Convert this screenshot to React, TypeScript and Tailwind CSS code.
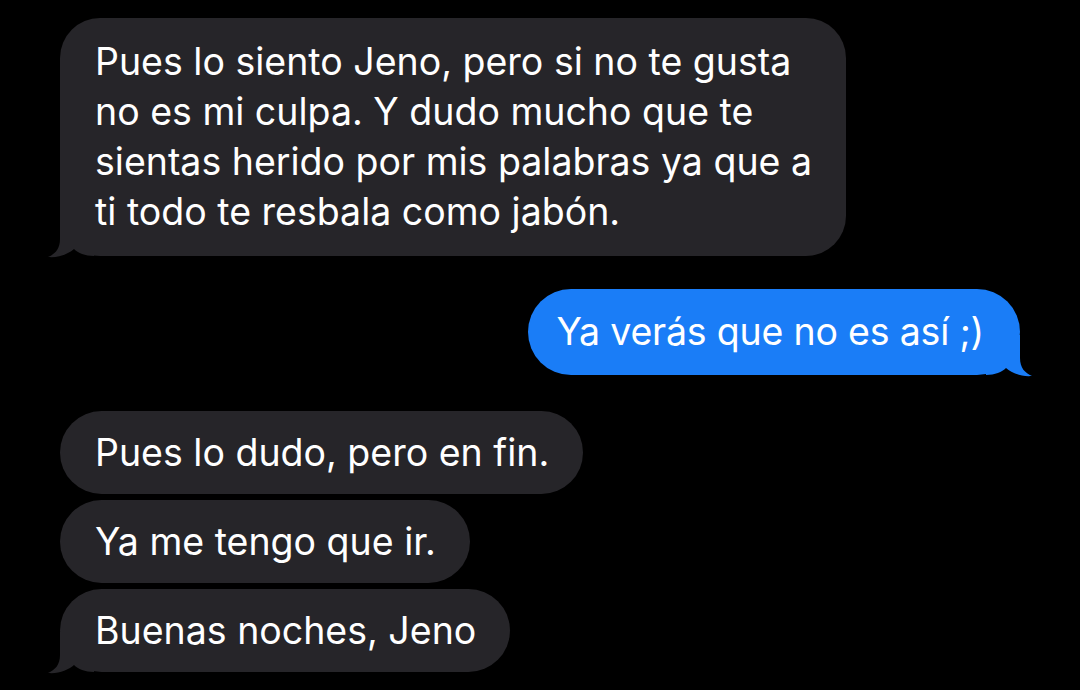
import { FC, ReactNode } from 'react'

const TAIL = 'M14 0 L14 23 C14 33 9 38 2 41 C13 42 22 38 28 33 C32 37 39 40 48 40 L48 0 Z'

const Tail: FC<{ color: string; side: 'left' | 'right' }> = ({ color, side }) => (
  <svg
    width="50"
    height="42"
    viewBox="0 0 50 42"
    className={
      side === 'left'
        ? 'absolute left-[-14px] bottom-[-2px]'
        : 'absolute right-[-14px] bottom-[-2px] -scale-x-100'
    }
  >
    <path d={TAIL} fill={color} />
  </svg>
)

const Received: FC<{ children: ReactNode; tail?: boolean; tall?: boolean }> = ({ children, tail, tall }) => (
  <div
    className={`relative self-start bg-[#262529] text-white pl-[35px] pr-[34px] ${
      tall ? 'py-[19px] leading-[50px] rounded-[40px]' : 'py-[16px] leading-[51px] rounded-full'
    }`}
  >
    {children}
    {tail && <Tail color="#262529" side="left" />}
  </div>
)

const App: FC = () => {
  const firstMessage = [
    'Pues lo siento Jeno, pero si no te gusta',
    'no es mi culpa. Y dudo mucho que te',
    'sientas herido por mis palabras ya que a',
    'ti todo te resbala como jabón.',
  ]

  return (
    <div
      className="w-[1080px] h-[690px] bg-black overflow-hidden pt-[18px] px-[60px] flex flex-col text-[37.5px] leading-[50px]"
      style={{ fontFamily: 'Inter, "Noto Sans", sans-serif' }}
    >
      <Received tail tall>
        {firstMessage.map((line) => (
          <div key={line} className="whitespace-nowrap">{line}</div>
        ))}
      </Received>

      <div className="relative self-end mt-[33px] bg-[#1a7df7] text-white pl-[28px] pr-[36px] py-[18px] rounded-full whitespace-nowrap tracking-[-0.2px]">
        Ya verás que no es así ;)
        <Tail color="#1a7df7" side="right" />
      </div>

      <div className="mt-[36px] flex flex-col gap-[6px]">
        <Received>Pues lo dudo, pero en fin.</Received>
        <Received>Ya me tengo que ir.</Received>
        <Received tail>Buenas noches, Jeno</Received>
      </div>
    </div>
  )
}

export default App
